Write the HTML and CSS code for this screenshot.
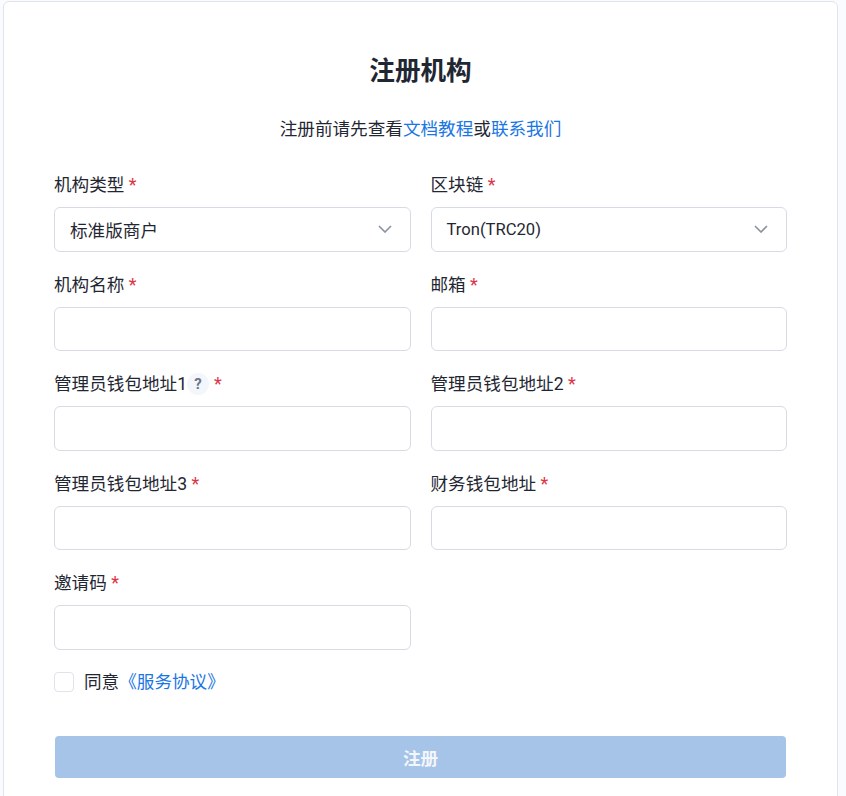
FILE: index.html
```html
<!DOCTYPE html>
<html lang="zh-CN">
<head>
  <meta charset="UTF-8">
  <meta name="viewport" content="width=device-width, initial-scale=1.0">
  <title>注册机构</title>
  <link rel="stylesheet" href="styles.css">
</head>
<body>
  <div class="card">
    <h1 class="title">注册机构</h1>
    <p class="intro">注册前请先查看<a href="#">文档教程</a>或<a href="#">联系我们</a></p>

    <form class="form-grid">
      <div class="field">
        <label>机构类型 <span class="req">*</span></label>
        <div class="control select">
          <span>标准版商户</span>
          <svg class="chevron" viewBox="0 0 14 8"><path d="M1 1l6 6 6-6"/></svg>
        </div>
      </div>
      <div class="field">
        <label>区块链 <span class="req">*</span></label>
        <div class="control select">
          <span class="latin">Tron(TRC20)</span>
          <svg class="chevron" viewBox="0 0 14 8"><path d="M1 1l6 6 6-6"/></svg>
        </div>
      </div>

      <div class="field">
        <label>机构名称 <span class="req">*</span></label>
        <input class="control" type="text">
      </div>
      <div class="field">
        <label>邮箱 <span class="req">*</span></label>
        <input class="control" type="text">
      </div>

      <div class="field">
        <label>管理员钱包地址1<span class="help">?</span><span class="req req-gap">*</span></label>
        <input class="control" type="text">
      </div>
      <div class="field">
        <label>管理员钱包地址2 <span class="req">*</span></label>
        <input class="control" type="text">
      </div>

      <div class="field">
        <label>管理员钱包地址3 <span class="req">*</span></label>
        <input class="control" type="text">
      </div>
      <div class="field">
        <label>财务钱包地址 <span class="req">*</span></label>
        <input class="control" type="text">
      </div>

      <div class="field">
        <label>邀请码 <span class="req">*</span></label>
        <input class="control" type="text">
      </div>
    </form>

    <div class="agree">
      <span class="checkbox"></span>
      <span>同意<a href="#">《服务协议》</a></span>
    </div>

    <button class="submit" type="button">注册</button>
  </div>
</body>
</html>
```

FILE: styles.css
```css
html, body {
  height: 796px;
  overflow: hidden;
}
body {
  margin: 0;
  background: #fafbfe;
  color: #1f2733;
  font-family: Roboto, "Noto Sans CJK SC", sans-serif;
  font-size: 17.6px;
}
a {
  color: #1a76e3;
  text-decoration: none;
}
.card {
  margin: 1px 8px 0 3px;
  padding: 0 50px;
  height: 900px;
  background: #fff;
  border: 1px solid #e2e4ec;
  border-radius: 6px;
}
.title {
  margin: 50px 0 0;
  font-size: 25.6px;
  line-height: 38px;
  font-weight: 700;
  text-align: center;
}
.intro {
  margin: 25px 0 0;
  line-height: 28px;
  text-align: center;
}
/* Form */
.form-grid {
  display: grid;
  grid-template-columns: 1fr 1fr;
  column-gap: 20px;
  row-gap: 20px;
  margin-top: 29px;
}
.field label {
  display: flex;
  align-items: center;
  height: 26px;
  margin-bottom: 9px;
  line-height: 26px;
  white-space: pre;
}
.req {
  color: #dc3545;
  font-size: 18px;
}
.req-gap {
  margin-left: 5px;
}
.help {
  display: flex;
  align-items: center;
  justify-content: center;
  width: 22px;
  height: 22px;
  border-radius: 50%;
  background: #f3f6fb;
  color: #6c7686;
  font-size: 15px;
  font-weight: 700;
}
.control {
  display: block;
  box-sizing: border-box;
  width: 100%;
  height: 44.5px;
  padding: 0 15px;
  background: #fff;
  border: 1px solid #d8dbe4;
  border-radius: 6px;
  color: #1f2733;
  font-family: inherit;
  font-size: 17.6px;
}
.select {
  display: flex;
  align-items: center;
  justify-content: space-between;
}
.latin {
  font-size: 16.6px;
}
.chevron {
  width: 14px;
  height: 8px;
  margin-right: 3px;
  fill: none;
  stroke: #8a919f;
  stroke-width: 1.6;
}
/* Agreement and submit */
.agree {
  display: flex;
  align-items: center;
  gap: 10px;
  margin-top: 20.5px;
  line-height: 24px;
}
.checkbox {
  box-sizing: border-box;
  width: 20px;
  height: 20px;
  border: 1px solid #dfe2ea;
  border-radius: 4px;
}
.submit {
  display: block;
  width: calc(100% - 2px);
  height: 42px;
  margin: 42px 1px 0;
  background: #a6c3e8;
  border: 0;
  border-radius: 4px;
  color: #f3f6fb;
  font-family: inherit;
  font-size: 17.6px;
  font-weight: 700;
}
```
